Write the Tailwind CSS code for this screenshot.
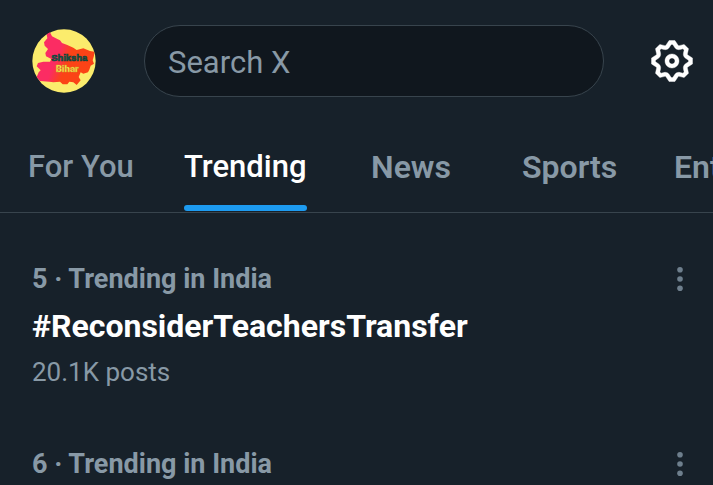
<!DOCTYPE html>
<html lang="en" class="bg-[#17212a]">
<head>
<meta charset="utf-8">
<meta name="viewport" content="width=device-width, initial-scale=1">
<title>Trending</title>
<script src="https://cdn.jsdelivr.net/npm/@tailwindcss/browser@4"></script>
</head>
<body class="h-screen overflow-hidden bg-[#17212a] font-['Roboto','Liberation_Sans',sans-serif] text-[#8899a6]">
<header class="flex items-center pt-[25px] pr-[17px] pl-8">
  <button type="button" aria-label="Account" class="size-16 shrink-0">
    <svg viewBox="6 6 192 192" class="size-16" aria-hidden="true">
      <defs>
        <linearGradient id="land" x1="0" x2="1" y1="0" y2=".35"><stop offset=".45" stop-color="#fb2c63"/><stop offset=".65" stop-color="#fb4316"/></linearGradient>
      </defs>
      <circle cx="102" cy="102" r="95" fill="#fbec6c"/>
      <path fill="url(#land)" d="M50 22L60 16L66 28L82 36L90 40L96 48L112 54L130 62L140 69L160 64L180 72L193 74L192 86L188 100L192 110L182 116L178 128L174 136L160 140L152 136L146 150L152 160L140 174L130 166L118 164L112 172L98 172L90 164L70 166L58 164L30 162L20 150L26 136L32 130L20 118L24 108L40 104L60 104L64 96L48 88L46 78L54 66L44 56L42 46L52 34Z"/>
      <text x="64" y="102" class="font-['Liberation_Sans',sans-serif] text-[28px] font-bold" fill="#0b7a55" stroke="#123b3a" stroke-width="2">Shiksha</text>
      <text x="77" y="136" class="font-['Roboto',sans-serif] text-[29px] font-extrabold" fill="#fff34d" stroke="#c8a030" stroke-width="1">Bihar</text>
    </svg>
  </button>
  <input type="search" aria-label="Search X" placeholder="Search X" class="mr-11 ml-12 h-[72px] min-w-0 flex-1 rounded-full border border-[#38444d] bg-[#10171e] px-[23px] pt-[3px] text-[31px] text-white outline-none placeholder:text-[#8899a6]">
  <button type="button" aria-label="Settings" class="size-12 shrink-0 text-white">
    <svg viewBox="0 0 24 24" class="size-12" fill="currentColor" stroke="currentColor" stroke-width=".2" stroke-linejoin="round" aria-hidden="true"><path d="M10.54 1.75h2.92l1.57 2.36c.11.17.32.25.53.21l2.53-.59 2.17 2.17-.58 2.54c-.05.2.04.41.21.53l2.36 1.57v2.92l-2.36 1.57c-.17.12-.26.33-.21.53l.58 2.54-2.17 2.17-2.53-.59c-.21-.04-.42.04-.53.21l-1.57 2.36h-2.92l-1.58-2.36c-.11-.17-.32-.25-.52-.21l-2.54.59-2.17-2.17.58-2.54c.05-.2-.03-.41-.21-.53l-2.35-1.57v-2.92L4.1 8.97c.18-.12.26-.33.21-.53L3.73 5.9 5.9 3.73l2.54.59c.2.04.41-.04.52-.21l1.58-2.36zm1.07 2l-.98 1.47C10.05 6.08 9 6.5 7.99 6.27l-1.46-.34-.6.6.33 1.46c.24 1.01-.18 2.07-1.05 2.64l-1.46.98v.78l1.46.98c.87.57 1.29 1.63 1.05 2.64l-.33 1.46.6.6 1.46-.34c1.01-.23 2.06.19 2.64 1.05l.98 1.47h.78l.97-1.47c.58-.86 1.63-1.28 2.65-1.05l1.45.34.61-.6-.34-1.46c-.23-1.01.18-2.07 1.05-2.64l1.47-.98v-.78l-1.47-.98c-.87-.57-1.28-1.63-1.05-2.64l.34-1.46-.61-.6-1.45.34c-1.02.23-2.07-.19-2.65-1.05l-.97-1.47h-.78zM12 10.5c-.83 0-1.5.67-1.5 1.5s.67 1.5 1.5 1.5c.82 0 1.5-.67 1.5-1.5s-.68-1.5-1.5-1.5zM8.5 12c0-1.93 1.56-3.5 3.5-3.5 1.93 0 3.5 1.57 3.5 3.5s-1.57 3.5-3.5 3.5c-1.94 0-3.5-1.57-3.5-3.5z"/></svg>
  </button>
</header>
<nav class="mt-6 grid grid-cols-[156px_187px_151px_152px_200px] justify-items-start overflow-hidden border-b border-[#38444d] pl-7 text-[32px] leading-[36px] font-semibold whitespace-nowrap">
  <a href="#" class="pt-7 pb-[27px] text-[31px] leading-[36px] font-medium">For You</a>
  <a href="#" aria-current="page" class="flex flex-col justify-between pt-7 pb-px text-[31px] leading-[36px] font-medium text-white">Trending<span class="h-1.5 rounded-full bg-[#1d9bf0]"></span></a>
  <a href="#" class="pt-7 pb-[27px]">News</a>
  <a href="#" class="pt-7 pb-[27px]">Sports</a>
  <a href="#" class="pt-7 pb-[27px]">Entertainment</a>
</nav>
<main>
  <article class="px-8 pt-[46px] pb-[7px]">
    <div class="flex h-10 items-center justify-between">
      <p class="text-[27px] leading-[40px] font-bold">5 · Trending in India</p>
      <button type="button" aria-label="More" class="-mr-3 w-6"><svg viewBox="0 0 24 28" class="h-7 w-6" fill="#6e7f8d" aria-hidden="true"><circle cx="11" cy="4.7" r="2.8"/><circle cx="11" cy="14" r="2.8"/><circle cx="11" cy="23.3" r="2.8"/></svg></button>
    </div>
    <h2 class="text-[32px] leading-[54px] font-bold text-white">#ReconsiderTeachersTransfer</h2>
    <p class="text-[26px] leading-[38px]">20.1K posts</p>
  </article>
  <article class="px-8 pt-[46px] pb-[7px]">
    <div class="flex h-10 items-center justify-between">
      <p class="text-[27px] leading-[40px] font-bold">6 · Trending in India</p>
      <button type="button" aria-label="More" class="-mr-3 w-6"><svg viewBox="0 0 24 28" class="h-7 w-6" fill="#6e7f8d" aria-hidden="true"><circle cx="11" cy="4.7" r="2.8"/><circle cx="11" cy="14" r="2.8"/><circle cx="11" cy="23.3" r="2.8"/></svg></button>
    </div>
  </article>
</main>
</body>
</html>
